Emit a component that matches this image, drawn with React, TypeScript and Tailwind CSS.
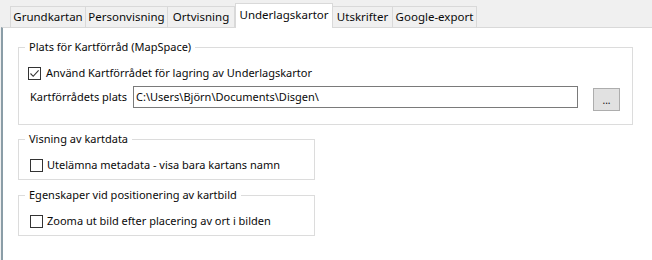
import React from "react";

const tabs = [
  { label: "Grundkartan", w: "w-[76px]" },
  { label: "Personvisning", w: "w-[82px]" },
  { label: "Ortvisning", w: "w-[67px]" },
  { label: "Underlagskartor", w: "w-[98px]", active: true },
  { label: "Utskrifter", w: "w-[60px]" },
  { label: "Google-export", w: "w-[84px]" },
];

const CheckBox: React.FC<{ checked?: boolean }> = ({ checked }) => (
  <span className="w-[13px] h-[13px] border border-[#333333] bg-white flex items-center justify-center shrink-0">
    {checked && (
      <svg width="11" height="11" viewBox="0 0 11 11" fill="none">
        <path d="M1.5 5.5 L4.2 8.3 L9.6 2.4" stroke="#333333" strokeWidth="1.1" />
      </svg>
    )}
  </span>
);

const GroupBox: React.FC<{ title: string; className: string; children: React.ReactNode }> = ({ title, className, children }) => (
  <fieldset className={`border border-[#dcdcdc] ${className}`}>
    <legend className="ml-[6px] px-[4px] leading-4">{title}</legend>
    {children}
  </fieldset>
);

export default function App() {
  return (
    <div className="w-[652px] h-[260px] bg-[#f0f0f0] flex flex-col text-[11px] text-[#0a0a0a] font-['Segoe_UI','Noto_Sans',sans-serif] overflow-hidden whitespace-nowrap">
      {/* tab strip */}
      <div className="h-[27px] pl-[10px] flex items-end relative z-10 text-[11.5px]">
        {tabs.map((t) =>
          t.active ? (
            <div
              key={t.label}
              className={`${t.w} h-[25px] -mb-px bg-white border border-b-0 border-[#d9d9d9] flex items-start justify-center pt-[3px] leading-4`}
            >
              {t.label}
            </div>
          ) : (
            <div
              key={t.label}
              className={`${t.w} h-[21px] border border-b-0 border-l-0 first:border-l border-[#d9d9d9] flex items-center justify-center leading-4`}
            >
              {t.label}
            </div>
          )
        )}
      </div>

      {/* panel */}
      <div className="flex-1 ml-[1px] bg-white border-t border-t-[#d9d9d9] border-l-2 border-l-[#8a9da7] pl-[15px] pt-[11px] flex flex-col">
        <GroupBox title="Plats för Kartförråd (MapSpace)" className="w-[615px] pb-[13px]">
          <div className="pl-[9px] mt-[10px] h-4 flex items-center gap-[5px]">
            <CheckBox checked />
            <span className="leading-4">Använd Kartförrådet för lagring av Underlagskartor</span>
          </div>
          <div className="pl-[11px] mt-[5px] flex items-start">
            <span className="w-[103px] h-[22px] flex items-center leading-4">Kartförrådets plats</span>
            <div className="w-[445px] h-[22px] border border-[#7a7a7a] bg-white flex items-center pl-[2px] leading-4">
              C:\Users\Björn\Documents\Disgen\
            </div>
            <button className="ml-[15px] mt-[2px] w-[27px] h-[23px] bg-[#e1e1e1] border border-[#adadad] flex items-center justify-center text-[10px] leading-none">
              ...
            </button>
          </div>
        </GroupBox>

        <GroupBox title="Visning av kartdata" className="mt-[6px] w-[297px] pb-[6px]">
          <div className="pl-[11px] mt-[10px] h-4 flex items-center gap-[4px]">
            <CheckBox />
            <span className="leading-4">Utelämna metadata - visa bara kartans namn</span>
          </div>
        </GroupBox>

        <GroupBox title="Egenskaper vid positionering av kartbild" className="mt-[7px] w-[297px] pb-[6px]">
          <div className="pl-[11px] mt-[10px] h-4 flex items-center gap-[4px]">
            <CheckBox />
            <span className="leading-4">Zooma ut bild efter placering av ort i bilden</span>
          </div>
        </GroupBox>
      </div>
    </div>
  );
}
